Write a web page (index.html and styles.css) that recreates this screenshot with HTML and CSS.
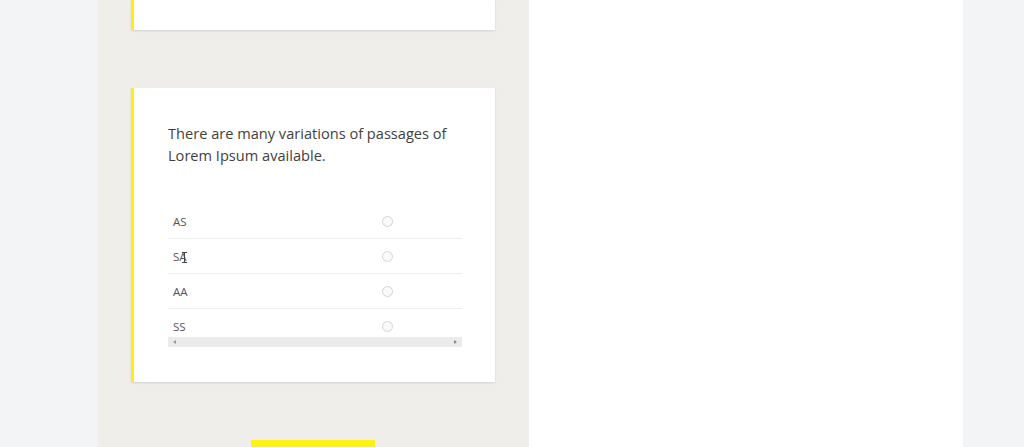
FILE: index.html
```html
<!DOCTYPE html>
<html>
<head>
<meta charset="utf-8">
<link rel="stylesheet" href="styles.css">
</head>
<body>
<div class="page">
  <div class="gutter"></div>
  <main class="main">
    <div class="card card-top"></div>
    <div class="card card-q">
      <p class="question">There are many variations of passages of Lorem Ipsum available.</p>
      <div class="table-wrap">
        <div class="rows">
          <div class="row"><span class="label">AS</span><span class="radio"></span></div>
          <div class="row"><span class="label">SA</span><span class="radio"></span><span class="cursor"></span></div>
          <div class="row"><span class="label">AA</span><span class="radio"></span></div>
          <div class="row"><span class="label">SS</span><span class="radio"></span></div>
        </div>
        <div class="scrollbar">
          <span class="arrow arrow-left"></span>
          <span class="arrow arrow-right"></span>
        </div>
      </div>
    </div>
    <div class="btn-wrap"><button class="btn"></button></div>
  </main>
  <aside class="side"></aside>
  <div class="gutter gutter-right"></div>
</div>
</body>
</html>
```
FILE: styles.css
```css
html, body {
  margin: 0;
  padding: 0;
  height: 100%;
  overflow: hidden;
  background: #f3f4f6;
  font-family: "Open Sans", "Noto Sans", sans-serif;
}
.page {
  display: flex;
  height: 447px;
  overflow: hidden;
}
.gutter {
  width: 98px;
  flex: none;
  background: #f3f4f6;
}
.gutter-right {
  width: 61px;
}
.main {
  width: 431px;
  flex: none;
  background: #efeeea;
  padding-left: 33px;
  box-sizing: border-box;
  display: flex;
  flex-direction: column;
  gap: 58px;
  overflow: hidden;
}
.side {
  width: 434px;
  flex: none;
  background: #ffffff;
}
.card {
  width: 364px;
  box-sizing: border-box;
  background: #fff;
  border-left: 3px solid #fff200;
  box-shadow: 0 1px 2px rgba(0, 0, 0, 0.12);
  flex: none;
}
.card-top {
  height: 30px;
}
.card-q {
  height: 294px;
  padding: 34px 33px 0 34px;
}
.question {
  margin: 0;
  font-size: 14.6px;
  line-height: 22px;
  color: #3f3f3f;
  width: 290px;
}
.table-wrap {
  margin-top: 38px;
  width: 294px;
}
.rows {
  height: 133px;
  overflow: hidden;
}
.row {
  height: 35px;
  box-sizing: border-box;
  border-bottom: 1px solid #eeeeee;
  display: grid;
  grid-template-columns: 214px 11px 1fr;
  align-items: center;
  position: relative;
  font-size: 11.5px;
  color: #555;
}
.label {
  padding-left: 5px;
}
.radio {
  width: 11px;
  height: 11px;
  box-sizing: border-box;
  border: 1px solid #d4d4d4;
  border-radius: 50%;
  background: #fafafa;
}
.cursor {
  position: absolute;
  left: 16px;
  top: 13px;
  width: 1px;
  height: 11px;
  background: #444;
}
.cursor::before,
.cursor::after {
  content: "";
  position: absolute;
  left: -2px;
  width: 5px;
  height: 1px;
  background: #444;
}
.cursor::before { top: 0; }
.cursor::after { bottom: 0; }
.scrollbar {
  height: 10px;
  background: #ebebeb;
  position: relative;
}
.arrow {
  position: absolute;
  top: 3px;
  width: 0;
  height: 0;
  border-top: 2px solid transparent;
  border-bottom: 2px solid transparent;
}
.arrow-left {
  left: 5px;
  border-right: 3px solid #999;
}
.arrow-right {
  right: 5px;
  border-left: 3px solid #888;
}
.btn-wrap {
  padding-left: 120px;
}
.btn {
  display: block;
  width: 124px;
  height: 7px;
  border: none;
  background: #fff212;
  padding: 0;
}
```
